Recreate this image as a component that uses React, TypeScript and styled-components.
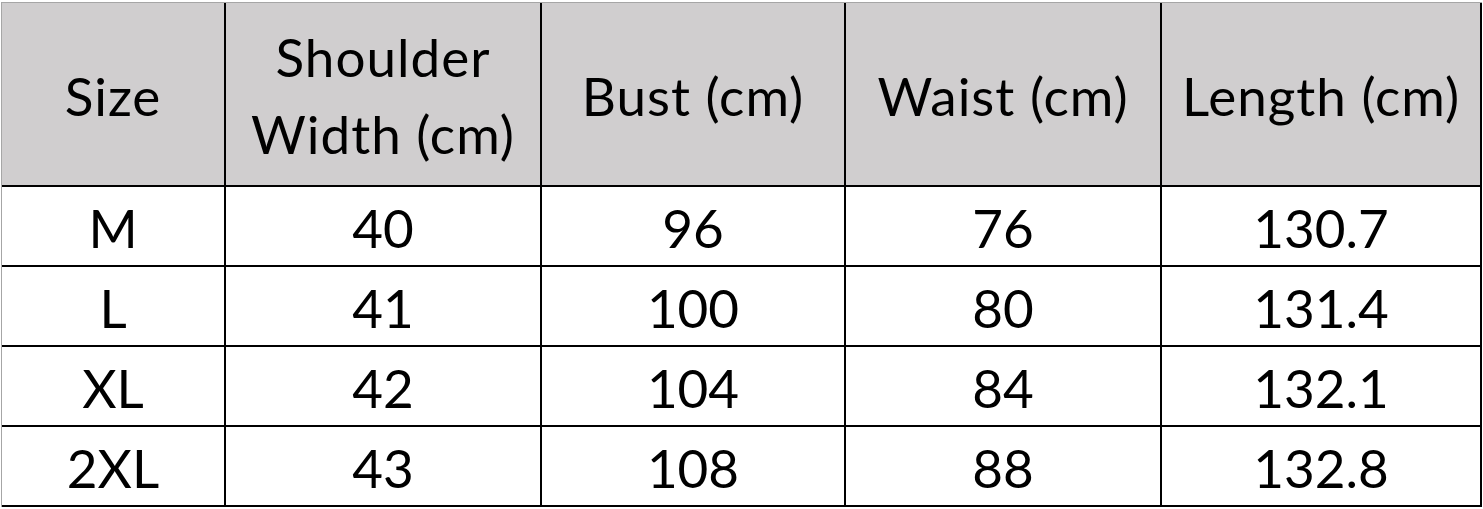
import React from "react";
import styled, { createGlobalStyle } from "styled-components";

const Global = createGlobalStyle`
  html, body { margin: 0; padding: 0; background: #ffffff; }
  body { font-family: Lato, "Open Sans", sans-serif; color: #000; }
`;

const Table = styled.div`
  display: grid;
  grid-template-columns: 224px 316px 304px 316px 320px;
  grid-auto-rows: 80px;
  grid-template-rows: 184px;
  margin: 2px 0 0 1px;
  width: max-content;
  border-top: 1px solid #a6a6a6;
  border-left: 1px solid #a6a6a6;
`;

const Cell = styled.div<{ $head?: boolean }>`
  box-sizing: border-box;
  display: flex;
  align-items: center;
  justify-content: center;
  text-align: center;
  border-right: 2px solid #000;
  border-bottom: 2px solid #000;
  background: ${(p) => (p.$head ? "#d0cecf" : "#ffffff")};
  font-size: 53px;
  line-height: 77px;
  letter-spacing: ${(p) => (p.$head ? "1px" : "0")};
  padding-top: ${(p) => (p.$head ? "2px" : "3px")};
  white-space: pre-line;
`;

const headers = ["Size", "Shoulder\nWidth (cm)", "Bust (cm)", "Waist (cm)", "Length (cm)"];
const rows = [
  ["M", "40", "96", "76", "130.7"],
  ["L", "41", "100", "80", "131.4"],
  ["XL", "42", "104", "84", "132.1"],
  ["2XL", "43", "108", "88", "132.8"],
];

export default function App() {
  return (
    <>
      <Global />
      <Table>
        {headers.map((h) => (
          <Cell $head key={h}>{h}</Cell>
        ))}
        {rows.map((r) =>
          r.map((v, i) => <Cell key={r[0] + i}>{v}</Cell>)
        )}
      </Table>
    </>
  );
}
